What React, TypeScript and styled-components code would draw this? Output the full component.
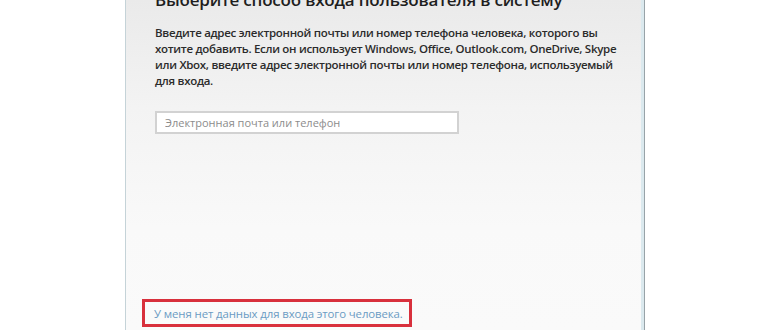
import React from "react";
import styled, { createGlobalStyle } from "styled-components";

const GlobalStyle = createGlobalStyle`
  html, body {
    margin: 0;
    padding: 0;
    background: #ffffff;
    overflow: hidden;
  }
  body {
    font-family: "Open Sans", "Noto Sans", "Liberation Sans", sans-serif;
  }
`;

const Page = styled.div`
  width: 770px;
  height: 330px;
  overflow: hidden;
`;

const Window = styled.div`
  box-sizing: border-box;
  margin: -12px 0 0 125px;
  width: 520px;
  height: 342px;
  display: flex;
  flex-direction: column;
  padding: 0 0 3px 29px;
  background: linear-gradient(180deg, #e9e9e9 0%, #f3f3f3 35%, #f9f9f9 70%, #fafafa 100%);
  border-left: 1px solid #c5d3d8;
  border-right: 1px solid #98a3a8;
  box-shadow: inset -3px 0 0 #dbe9ee;
`;

const Title = styled.h1`
  margin: 0;
  font-size: 17px;
  line-height: 24px;
  font-weight: 600;
  color: #1e1e1e;
  letter-spacing: -0.2px;
  white-space: nowrap;
`;

const Description = styled.p`
  margin: 13px 0 0;
  font-size: 11.5px;
  line-height: 16px;
  font-weight: 600;
  color: #2b2b2b;
  letter-spacing: -0.3px;
  white-space: nowrap;
`;

const EmailInput = styled.input`
  box-sizing: border-box;
  margin-top: 22px;
  width: 304px;
  height: 23px;
  padding: 0 8px;
  border: 2px solid #d2d2d2;
  background: #ffffff;
  font-family: inherit;
  font-size: 11px;
  color: #333;
  outline: none;

  &::placeholder {
    color: #8c8c8c;
  }
`;

const Spacer = styled.div`
  flex: 1;
`;

const Highlight = styled.div`
  align-self: flex-start;
  box-sizing: border-box;
  margin-left: -13px;
  height: 28px;
  display: flex;
  align-items: center;
  padding: 0 6px 0 9px;
  border: 3px solid #d8303c;
`;

const NoDataLink = styled.a`
  font-size: 11.4px;
  color: #6b9bc3;
  text-decoration: none;
  cursor: pointer;
  letter-spacing: -0.1px;
`;

export default function App() {
  return (
    <Page>
      <GlobalStyle />
      <Window>
        <Title>Выберите способ входа пользователя в систему</Title>
        <Description>
          Введите адрес электронной почты или номер телефона человека, которого вы
          <br />
          хотите добавить. Если он использует Windows, Office, Outlook.com, OneDrive, Skype
          <br />
          или Xbox, введите адрес электронной почты или номер телефона, используемый
          <br />
          для входа.
        </Description>
        <EmailInput placeholder="Электронная почта или телефон" />
        <Spacer />
        <Highlight>
          <NoDataLink>У меня нет данных для входа этого человека.</NoDataLink>
        </Highlight>
      </Window>
    </Page>
  );
}
